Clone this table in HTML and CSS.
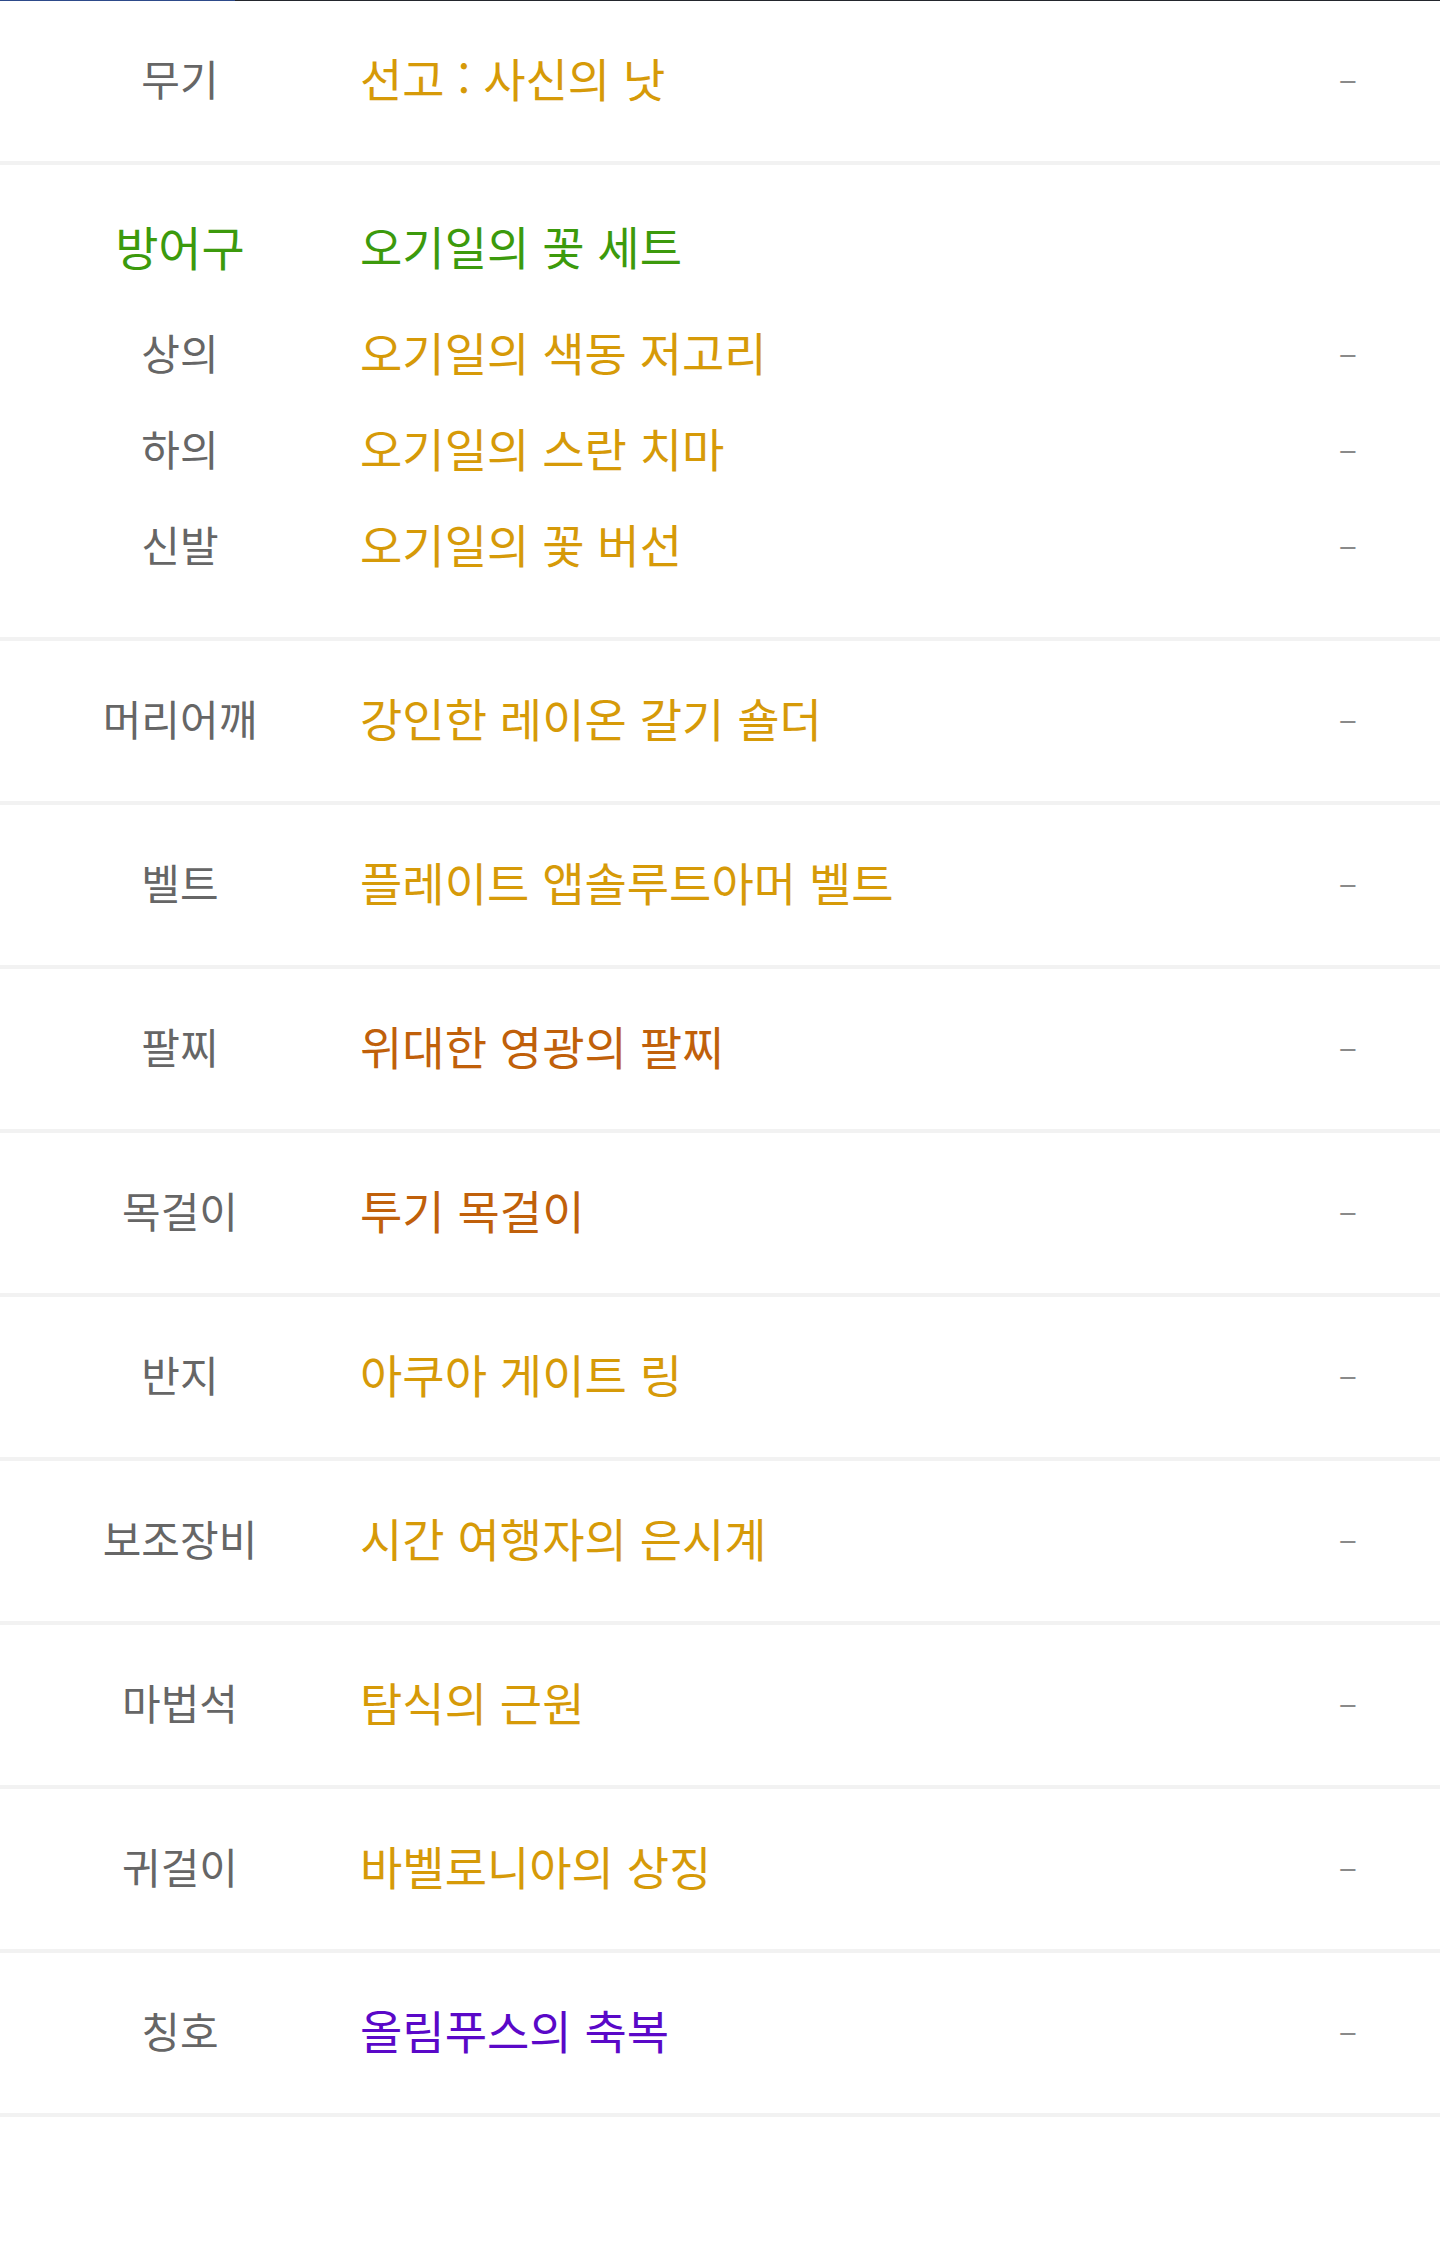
FILE: index.html
```html
<!DOCTYPE html>
<html lang="ko">
<head>
  <meta charset="UTF-8" />
  <meta name="viewport" content="width=device-width, initial-scale=1" />
  <title>장비</title>
  <link rel="stylesheet" href="styles.css">
</head>
<body>

<div class="topline"><span class="topline-fill"></span></div>

<ul class="equip">
  <li class="row">
    <span class="slot">무기</span>
    <span class="item gold">선고 : 사신의 낫</span>
    <span class="dash">–</span>
  </li>

  <li class="set">
    <div class="set-head">
      <span class="slot set-name">방어구</span>
      <span class="item green">오기일의 꽃 세트</span>
    </div>
    <div class="sub">
      <span class="slot">상의</span>
      <span class="item gold">오기일의 색동 저고리</span>
      <span class="dash">–</span>
    </div>
    <div class="sub">
      <span class="slot">하의</span>
      <span class="item gold">오기일의 스란 치마</span>
      <span class="dash">–</span>
    </div>
    <div class="sub">
      <span class="slot">신발</span>
      <span class="item gold">오기일의 꽃 버선</span>
      <span class="dash">–</span>
    </div>
  </li>

  <li class="row">
    <span class="slot">머리어깨</span>
    <span class="item gold">강인한 레이온 갈기 숄더</span>
    <span class="dash">–</span>
  </li>
  <li class="row">
    <span class="slot">벨트</span>
    <span class="item gold">플레이트 앱솔루트아머 벨트</span>
    <span class="dash">–</span>
  </li>
  <li class="row">
    <span class="slot">팔찌</span>
    <span class="item rust">위대한 영광의 팔찌</span>
    <span class="dash">–</span>
  </li>
  <li class="row">
    <span class="slot">목걸이</span>
    <span class="item rust">투기 목걸이</span>
    <span class="dash">–</span>
  </li>
  <li class="row">
    <span class="slot">반지</span>
    <span class="item gold">아쿠아 게이트 링</span>
    <span class="dash">–</span>
  </li>
  <li class="row">
    <span class="slot">보조장비</span>
    <span class="item gold">시간 여행자의 은시계</span>
    <span class="dash">–</span>
  </li>
  <li class="row">
    <span class="slot">마법석</span>
    <span class="item gold">탐식의 근원</span>
    <span class="dash">–</span>
  </li>
  <li class="row">
    <span class="slot">귀걸이</span>
    <span class="item gold">바벨로니아의 상징</span>
    <span class="dash">–</span>
  </li>
  <li class="row">
    <span class="slot">칭호</span>
    <span class="item purple">올림푸스의 축복</span>
    <span class="dash">–</span>
  </li>
</ul>

</body>
</html>
```

FILE: styles.css
```css
body {
  margin: 0;
  padding: 0;
  background: #fff;
  font-family: "Noto Sans CJK KR", "Noto Sans", sans-serif;
  color: #666;
}
.topline {
  height: 1px;
  background-color: #23262d;
}
.topline-fill {
  display: block;
  width: 235px;
  height: 1px;
  background-color: #2d4a8a;
}
.equip {
  list-style: none;
  margin: 0;
  padding: 0;
}
.row,
.sub,
.set-head {
  display: flex;
  align-items: center;
}
.row {
  height: 152px;
  padding-bottom: 8px;
  border-bottom: 4px solid #f2f2f2;
}
.set {
  height: 394px;
  padding: 32px 0 46px;
  border-bottom: 4px solid #f2f2f2;
}
.set-head {
  height: 96px;
  margin-bottom: 10px;
}
.sub {
  height: 96px;
}
.slot {
  width: 360px;
  flex-shrink: 0;
  text-align: center;
  font-size: 42px;
  color: #666;
}
.set-name {
  font-size: 47px;
  color: #3c9a0c;
}
.item {
  flex: 1;
  font-size: 46px;
}
.dash {
  width: 100px;
  padding-right: 83px;
  text-align: right;
  font-size: 34px;
  color: #8a8a8a;
}
.gold {
  color: #d69a08;
}
.green {
  color: #3c9a0c;
}
.rust {
  color: #c0600a;
}
.purple {
  color: #5a08c8;
}
```
